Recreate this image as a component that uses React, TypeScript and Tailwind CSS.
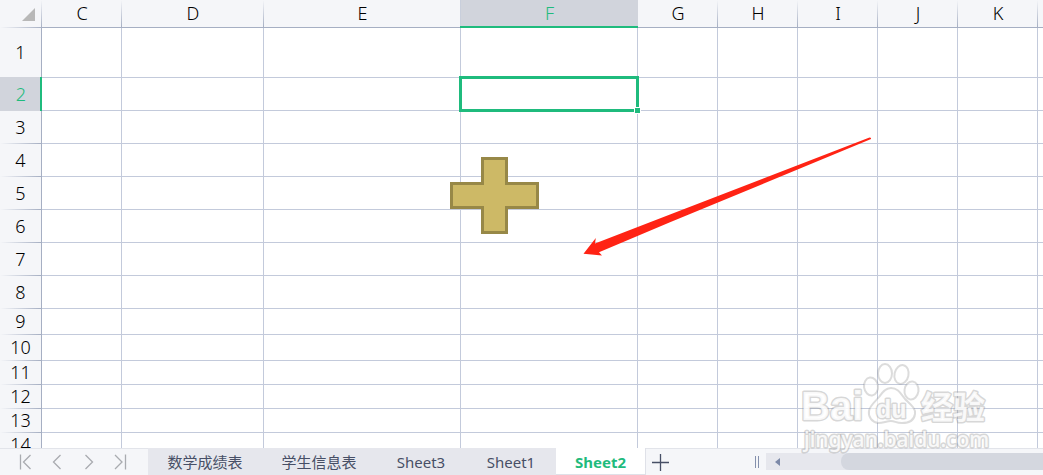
import React from 'react';

type Column = { name: string; width: string; selected?: boolean };
type Row = { name: number; height: string; selected?: boolean };

const columns: Column[] = [
  { name: 'C', width: 'w-20' },
  { name: 'D', width: 'w-[142px]' },
  { name: 'E', width: 'w-[197px]' },
  { name: 'F', width: 'w-[177px]', selected: true },
  { name: 'G', width: 'w-20' },
  { name: 'H', width: 'w-20' },
  { name: 'I', width: 'w-20' },
  { name: 'J', width: 'w-20' },
  { name: 'K', width: 'w-20' },
  { name: '', width: 'w-auto' },
];

const rows: Row[] = [
  { name: 1, height: 'h-[50px]' },
  { name: 2, height: 'h-[33px]', selected: true },
  { name: 3, height: 'h-[33px]' },
  { name: 4, height: 'h-[33px]' },
  { name: 5, height: 'h-[33px]' },
  { name: 6, height: 'h-[33px]' },
  { name: 7, height: 'h-[33px]' },
  { name: 8, height: 'h-[33px]' },
  { name: 9, height: 'h-[26px]' },
  { name: 10, height: 'h-[26px]' },
  { name: 11, height: 'h-6' },
  { name: 12, height: 'h-6' },
  { name: 13, height: 'h-6' },
  { name: 14, height: 'h-6' },
];

const sheets = [
  { name: '数学成绩表', width: 'w-[114px]' },
  { name: '学生信息表', width: 'w-[114px]' },
  { name: 'Sheet3', width: 'w-[90px]' },
  { name: 'Sheet1', width: 'w-[90px]' },
  { name: 'Sheet2', width: 'w-[90px]' },
];

function ColumnHeader({ column }: { column: Column }) {
  if (column.selected) {
    return (
      <th scope="col" className="relative bg-[#d1d4dc] p-0 pb-0.5 font-light text-[#1fbb7d]">
        {column.name}
        <span className="absolute bottom-0 -left-px right-0 h-0.5 bg-[#1fbb7d]" />
      </th>
    );
  }
  return (
    <th scope="col" className="relative border-b border-[#a6afc3] p-0 pb-0.5 font-light text-black">
      {column.name}
      {column.name && (
        <span
          className={
            column.name === 'E'
              ? 'absolute inset-y-0 right-0 w-px bg-[#c9cfdc]'
              : 'absolute inset-y-0 right-0 w-px bg-linear-to-b from-[#f5f6f9] to-[#a6afc3]'
          }
        />
      )}
    </th>
  );
}

function RowHeader({ row }: { row: Row }) {
  if (row.selected) {
    return (
      <th scope="row" className="relative bg-[#d1d4dc] p-0 pb-0.5 font-light text-[#1fbb7d]">
        {row.name}
        <span className="absolute -top-px bottom-0 right-0 w-0.5 bg-[#1fbb7d]" />
      </th>
    );
  }
  return (
    <th scope="row" className="relative border-r border-[#a6afc3] bg-[#f5f6f9] p-0 pb-0.5 font-light text-black">
      {row.name}
      <span
        className={
          row.name === 1
            ? 'absolute inset-x-0 bottom-0 h-px bg-[#d1d4dc]'
            : 'absolute inset-x-0 bottom-0 h-px bg-linear-to-r from-[#f5f6f9] to-[#a6afc3]'
        }
      />
    </th>
  );
}

function Selection() {
  return (
    <div className="absolute -inset-0.5 z-10 border-3 border-[#1fbb7d]">
      <span className="absolute -bottom-[5px] -right-[5px] size-[7px] border border-white bg-[#1fbb7d]" />
    </div>
  );
}

function Shapes() {
  return (
    <svg className="pointer-events-none absolute left-0 top-0 z-10" width="1043" height="300" aria-hidden="true">
      <path
        d="M482.5 158.5H506.5V183.5H537.5V207.5H506.5V232.5H482.5V207.5H451.5V183.5H482.5Z"
        fill="#cdb966"
        stroke="#978847"
        strokeWidth="3"
      />
      <path
        d="M583.5 253.8L595.8 238L595 243.6L670 214.5L869.5 137.6Q872 138 870.5 139.3L670 222.3L599 252.3L602 255.5Z"
        fill="#ff2314"
      />
    </svg>
  );
}

function Watermark() {
  return (
    <svg
      className="pointer-events-none absolute bottom-2 right-[50px] z-20"
      width="203"
      height="107"
      viewBox="790 360 203 107"
      aria-hidden="true"
    >
      <g fill="#ffffff" fillOpacity="0.6" stroke="#8c8c8c" strokeOpacity="0.3" strokeWidth="2" strokeLinejoin="round">
        <ellipse cx="871" cy="386.500" rx="7" ry="9" transform="rotate(-8 871 386.500)" />
        <ellipse cx="885" cy="373.500" rx="7" ry="9.500" />
        <ellipse cx="901.500" cy="374.500" rx="7" ry="9.500" transform="rotate(12 901.500 374.500)" />
        <ellipse cx="911.500" cy="390.500" rx="7" ry="9" transform="rotate(8 911.500 390.500)" />
        <path d="M891 388C898 388 901 394 905 399C910 404 916 408 915 414C914 421 908 423 902 423C896 423 895 421 891 421C886 421 884 423 878 423C872 422 868 417 869 411C870 405 875 402 879 397C882 393 885 388 891 388Z" />
      </g>
      <g
        fill="#ffffff"
        fillOpacity="0.85"
        stroke="#8c8c8c"
        strokeOpacity="0.35"
        strokeWidth="3"
        strokeLinejoin="round"
        paintOrder="stroke"
      >
        <text x="801" y="420" className="font-['Liberation_Sans'] text-[40px] font-bold">
          Bai
        </text>
        <text x="876" y="418" className="font-['Liberation_Sans'] text-[25px] font-bold">
          du
        </text>
        <text x="921" y="419" className="font-['Noto_Sans_CJK_SC',sans-serif] text-[32px] font-bold">
          经验
        </text>
        <text x="804" y="447" className="font-['Noto_Sans',sans-serif] text-[21px] font-medium">
          jingyan.baidu.com
        </text>
      </g>
    </svg>
  );
}

function NavButton({ label, d }: { label: string; d: string }) {
  return (
    <button type="button" aria-label={label} className="flex h-full w-8 items-center justify-center">
      <svg width="14" height="16" viewBox="0 0 14 16" fill="none" stroke="#a9abb0" strokeWidth="1.300">
        <path d={d} />
      </svg>
    </button>
  );
}

function SheetBar() {
  return (
    <footer className="flex h-[27px] shrink-0 border-t border-[#e2e4ea] bg-[#f5f6f9]">
      <nav aria-label="Sheet navigation" className="flex w-[148px] shrink-0 pl-[9px]">
        <NavButton label="First sheet" d="M2.500 .5V15.500M12.500 1L5.500 8L12.500 15" />
        <NavButton label="Previous sheet" d="M10.500 1L3.500 8L10.500 15" />
        <NavButton label="Next sheet" d="M3.500 1L10.500 8L3.500 15" />
        <NavButton label="Last sheet" d="M1 1L8 8L1 15M11.500 .5V15.500" />
      </nav>
      <div
        role="tablist"
        className="-mt-px flex shrink-0 font-['Noto_Sans','Noto_Sans_CJK_SC',sans-serif] text-[15px] leading-5"
      >
        {sheets.map((sheet) => {
          const active = sheet.name === 'Sheet2';
          return (
            <button
              key={sheet.name}
              type="button"
              role="tab"
              aria-selected={active}
              className={`${sheet.width} ${
                active
                  ? 'border-b border-r border-[#dfe1e8] bg-white pt-0.5 font-bold text-[#1fbb7d]'
                  : 'bg-[#e6e7ed] text-[#474f66]'
              }`}
            >
              {sheet.name}
            </button>
          );
        })}
      </div>
      <button type="button" aria-label="Add sheet" className="flex w-7 shrink-0 items-center justify-center">
        <svg width="17" height="17" viewBox="0 0 17 17" stroke="#474f66" strokeWidth="1.300">
          <path d="M0 8.500H17M8.500 0V17" />
        </svg>
      </button>
      <div className="flex flex-1 items-center justify-end pr-[7px]">
        <span className="h-3 w-1 border-x border-[#8490ad]" />
      </div>
      <div className="mt-1 flex h-[17px] w-[277px] shrink-0 bg-[#e6e7ed]">
        <button type="button" aria-label="Scroll left" className="flex w-[75px] items-center pl-[9px]">
          <svg width="5" height="8" viewBox="0 0 5 8" fill="#7c89a8">
            <path d="M5 0V8L0 4Z" />
          </svg>
        </button>
        <div className="flex-1 rounded-l-lg bg-[#d4d7df]" />
      </div>
    </footer>
  );
}

export default function App() {
  return (
    <div className="relative flex h-screen flex-col overflow-hidden bg-white">
      <main className="relative min-h-0 flex-1 overflow-hidden">
        <table className="w-full table-fixed border-separate border-spacing-0 font-['Noto_Sans',sans-serif] text-lg leading-5">
          <colgroup>
            <col className="w-[42px]" />
            {columns.map((column) => (
              <col key={column.name} className={column.width} />
            ))}
          </colgroup>
          <thead>
            <tr className="h-7 bg-[#f5f6f9]">
              <th className="relative p-0">
                <svg className="ml-[22px]" width="13" height="13" viewBox="0 0 13 13" fill="#b8b8b8">
                  <path d="M13 0V13H0Z" />
                </svg>
                <span className="absolute inset-x-0 bottom-0 h-px bg-linear-to-r from-[#f5f6f9] to-[#a6afc3]" />
                <span className="absolute inset-y-0 right-0 w-px bg-linear-to-b from-[#f5f6f9] to-[#a6afc3]" />
              </th>
              {columns.map((column) => (
                <ColumnHeader key={column.name} column={column} />
              ))}
            </tr>
          </thead>
          <tbody>
            {rows.map((row) => (
              <tr key={row.name} className={row.height}>
                <RowHeader row={row} />
                {columns.map((column) => (
                  <td
                    key={column.name}
                    className="relative border-b border-r border-[#c3cadb] p-0 last:border-r-0"
                  >
                    {row.selected && column.selected && <Selection />}
                  </td>
                ))}
              </tr>
            ))}
          </tbody>
        </table>
        <Shapes />
      </main>
      <SheetBar />
      <Watermark />
    </div>
  );
}
